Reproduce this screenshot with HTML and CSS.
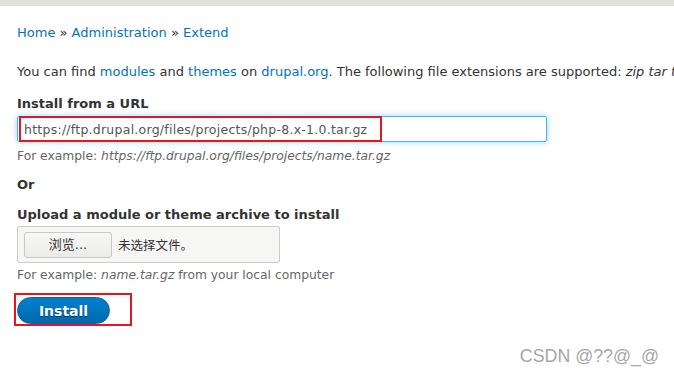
FILE: index.html
```html
<!DOCTYPE html>
<html lang="en">
<head>
    <meta charset="UTF-8">
    <title>Install new module or theme</title>
    <link rel="stylesheet" href="styles.css">
</head>
<body>
    <div class="topbar"></div>

    <div class="content">
        <nav class="breadcrumb">
            <a href="#">Home</a> » <a href="#">Administration</a> » <a href="#">Extend</a>
        </nav>

        <p class="intro">You can find <a href="#">modules</a> and <a href="#">themes</a> on <a href="#">drupal.org</a>. The following file extensions are supported: <em>zip tar tgz gz bz2</em>.</p>

        <div class="form-item">
            <label class="form-label" for="url">Install from a URL</label>
            <div class="input-wrap">
                <input id="url" class="form-text" type="text" value="https://ftp.drupal.org/files/projects/php-8.x-1.0.tar.gz">
                <span class="mark mark-url"></span>
            </div>
            <div class="description">For example: <em>https://ftp.drupal.org/files/projects/name.tar.gz</em></div>
        </div>

        <div class="or">Or</div>

        <div class="form-item form-item-upload">
            <label class="form-label">Upload a module or theme archive to install</label>
            <div class="file-widget">
                <span class="file-btn">浏览...</span>
                <span class="file-name">未选择文件。</span>
            </div>
            <div class="description description-file">For example: <em>name.tar.gz</em> from your local computer</div>
        </div>

        <div class="actions">
            <button class="button-primary">Install</button>
            <span class="mark mark-btn"></span>
        </div>
    </div>

    <div class="watermark">CSDN @??@_@</div>
</body>
</html>
```

FILE: styles.css
```css
body {
    margin: 0;
    background-color: #fff;
    font-family: 'DejaVu Sans', sans-serif;
    font-size: 13px;
    color: #333;
    overflow: hidden;
    width: 674px;
    height: 376px;
    position: relative;
}
a {
    color: #0074bd;
    text-decoration: none;
}
.topbar {
    height: 6px;
    background-color: #e1e0da;
}
.content {
    padding: 0 0 0 17px;
    white-space: nowrap;
}
.breadcrumb {
    margin: 19px 0 0;
    line-height: 15px;
}
.intro {
    margin: 24px 0 0;
    line-height: 15px;
}
.form-item {
    margin-top: 17px;
}
.form-item-upload {
    margin-top: 15px;
}
.form-label {
    display: block;
    font-weight: bold;
    color: #333;
    line-height: 15px;
}
.input-wrap {
    position: relative;
    margin-top: 5px;
    width: 530px;
}
.form-text {
    box-sizing: border-box;
    width: 530px;
    height: 26px;
    padding: 0 6px;
    border: 1px solid #40b6ff;
    border-radius: 2px;
    box-shadow: 0 0 6px rgba(64, 182, 255, 0.55);
    font-family: 'DejaVu Sans', sans-serif;
    font-size: 12.5px;
    letter-spacing: 0.25px;
    color: #555;
    outline: none;
}
.mark {
    position: absolute;
    border: 2px solid #e8141e;
    pointer-events: none;
}
.mark-url {
    left: 2px;
    top: 0;
    width: 359px;
    height: 22px;
}
.description {
    margin-top: 7px;
    font-size: 12.3px;
    color: #666;
    line-height: 14px;
}
.description-file {
    margin-top: 5px;
}
.or {
    margin-top: 14px;
    font-weight: bold;
    line-height: 15px;
}
.file-widget {
    display: flex;
    align-items: center;
    box-sizing: border-box;
    width: 263px;
    height: 37px;
    margin-top: 4px;
    padding: 0 6px;
    border: 1px solid #ccc;
    border-radius: 2px;
    background-color: #f6f6f4;
}
.file-btn {
    box-sizing: border-box;
    width: 88px;
    height: 26px;
    line-height: 24px;
    text-align: center;
    border: 1px solid #c8c8c6;
    border-radius: 3px;
    background: linear-gradient(#f8f8f6, #ebebe9);
    color: #333;
    font-size: 13px;
    font-family: 'DejaVu Sans', 'Noto Sans CJK SC', sans-serif;
}
.file-name {
    margin-left: 6px;
    font-size: 12.5px;
    font-family: 'DejaVu Sans', 'Noto Sans CJK SC', sans-serif;
    color: #333;
}
.actions {
    position: relative;
    margin-top: 15px;
    width: 118px;
}
.button-primary {
    display: block;
    width: 93px;
    height: 27px;
    border: 1px solid #1e5c90;
    border-radius: 14px;
    background: linear-gradient(#0081d0, #0069ad);
    color: #fff;
    font-family: 'DejaVu Sans', sans-serif;
    font-size: 14px;
    font-weight: bold;
    text-shadow: 0 1px 1px rgba(0, 0, 0, 0.5);
    padding: 0;
}
.mark-btn {
    left: -3px;
    top: -4px;
    width: 114px;
    height: 29px;
}
.watermark {
    position: absolute;
    right: 15px;
    bottom: 9px;
    font-family: 'Liberation Sans', sans-serif;
    font-size: 17.8px;
    color: #a6a6a6;
}
```
